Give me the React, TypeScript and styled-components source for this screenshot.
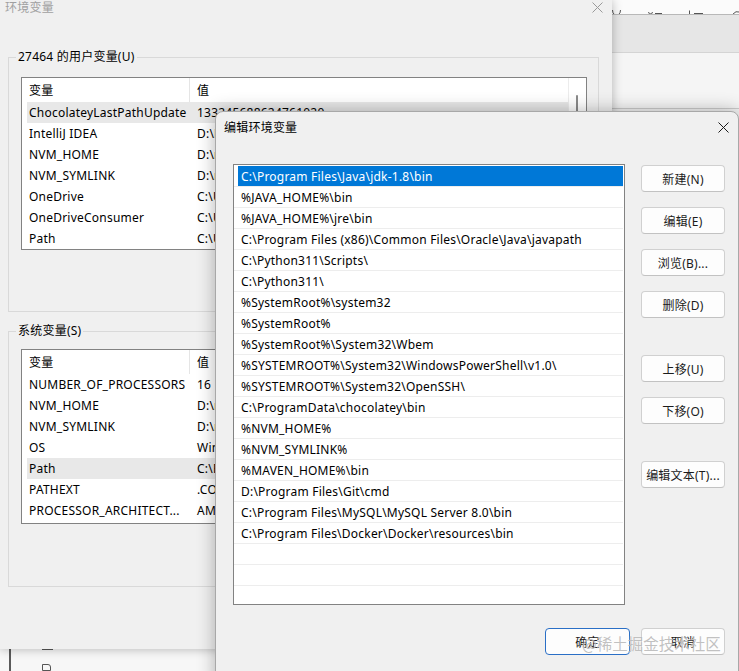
import React from "react";
import styled, { createGlobalStyle } from "styled-components";

const FONT = `"Noto Sans", "Noto Sans CJK SC", sans-serif`;

const Global = createGlobalStyle`
  html, body { margin: 0; padding: 0; background: #f4f4f4; }
  body { font-family: ${FONT}; font-size: 12px; letter-spacing: 0.22px; color: #000; }
  * { box-sizing: border-box; }
`;

const Desktop = styled.div`
  position: relative;
  width: 739px;
  height: 671px;
  overflow: hidden;
  background: #f4f4f4;
`;

/* ---------- windows behind ---------- */
const OtherApp = styled.div`
  position: absolute;
  left: 600px;
  top: 0;
  width: 139px;
  display: flex;
  flex-direction: column;
`;
const OtherStrip = styled.div`
  height: 15px;
  background: #fbfbfb;
  border-bottom: 1px solid #b8b8b8;
  overflow: hidden;
  display: flex;
`;
const OtherBand = styled.div`
  height: 38px;
  background: #e6e6e6;
  border-bottom: 1px solid #d4d4d4;
`;
const OtherBody = styled.div`
  height: 56px;
  background: #f5f5f5;
  border-bottom: 1px solid #cdcdcd;
`;

const BottomApp = styled.div`
  position: absolute;
  left: 0;
  top: 640px;
  width: 240px;
  height: 31px;
  background: #f7f7f7;
  display: flex;
  padding-left: 9px;
`;
const BottomRail = styled.div`
  width: 2px;
  background: #5a5a5a;
`;
const BottomIcons = styled.div`
  display: flex;
  flex-direction: column;
  gap: 14px;
  padding: 6px 0 0 31px;
`;
const TinyBox = styled.div`
  width: 11px;
  height: 6px;
  border: 1px solid #555;
  border-top: none;
`;
const TinyFile = styled.div`
  width: 9px;
  height: 10px;
  border: 1px solid #555;
  border-top-right-radius: 3px;
`;

/* ---------- back dialog: 环境变量 ---------- */
const EnvDialog = styled.div`
  position: absolute;
  left: 0;
  top: 0;
  width: 612px;
  height: 649px;
  background: #f0f0f0;
  box-shadow: 0 0 10px rgba(0, 0, 0, 0.28);
  display: flex;
  flex-direction: column;
`;
const EnvTitleBar = styled.div`
  height: 14px;
  display: flex;
  align-items: center;
  justify-content: space-between;
  padding: 0 9px 0 5px;
  color: #a0a0a0;
  font-size: 12px;
`;
const EnvBody = styled.div`
  padding: 0 13px 0 8px;
  display: flex;
  flex-direction: column;
`;
const Group = styled.fieldset<{ $mt: number }>`
  margin: ${(p) => p.$mt}px 0 0 0;
  padding: 0;
  border: 1px solid #d9d9d9;
  min-width: 0;
`;
const Legend = styled.legend`
  margin-left: 7px;
  padding: 0 2px;
  line-height: 16px;
  font-size: 12px;
  color: #000;
`;
const GroupInner = styled.div<{ $pt: number; $h: number }>`
  height: ${(p) => p.$h}px;
  padding: ${(p) => p.$pt}px 11px 0 12px;
`;
const ListView = styled.div<{ $h: number }>`
  height: ${(p) => p.$h}px;
  background: #fff;
  border: 1px solid #828282;
  display: flex;
  overflow: hidden;
`;
const ListMain = styled.div`
  flex: 1;
  min-width: 0;
  display: flex;
  flex-direction: column;
`;
const HeaderRow = styled.div`
  height: 24px;
  display: grid;
  grid-template-columns: 168px 1fr;
  flex-shrink: 0;
`;
const HeaderCell = styled.div<{ $divider?: boolean }>`
  padding-left: 7px;
  display: flex;
  align-items: center;
  border-right: ${(p) => (p.$divider ? "1px solid #e5e5e5" : "none")};
`;
const DataRow = styled.div<{ $hl?: boolean }>`
  height: 21px;
  margin-left: 5px;
  display: grid;
  grid-template-columns: 163px 1fr;
  align-items: center;
  background: ${(p) => (p.$hl ? "#e8e8e8" : "transparent")};
  white-space: nowrap;
`;
const NameCell = styled.div`
  padding-left: 2px;
  overflow: hidden;
`;
const ValueCell = styled.div`
  padding-left: 7px;
  overflow: hidden;
`;
const ScrollTrack = styled.div`
  width: 18px;
  border-left: 1px solid #ececec;
  padding: 17px 0 0 7px;
`;
const ScrollThumb = styled.div`
  width: 2px;
  height: 60px;
  background: #8a8a8a;
  border-radius: 1px;
`;

/* ---------- front dialog: 编辑环境变量 ---------- */
const EditDialog = styled.div`
  position: absolute;
  left: 215px;
  top: 111px;
  width: 524px;
  height: 575px;
  background: #f0f0f0;
  border: 1px solid #a8a8a8;
  border-radius: 8px 8px 0 0;
  box-shadow: 0 0 18px rgba(0, 0, 0, 0.3);
  display: flex;
  flex-direction: column;
`;
const EditTitleBar = styled.div`
  height: 30px;
  display: flex;
  align-items: center;
  justify-content: space-between;
  padding: 0 9px 0 8px;
  font-size: 12px;
`;
const EditBody = styled.div`
  display: flex;
  gap: 16px;
  padding: 22px 13px 0 17px;
`;
const PathList = styled.div`
  width: 392px;
  height: 441px;
  background: #fff;
  border: 1px solid #828282;
  padding-top: 1px;
  overflow: hidden;
`;
const PathRow = styled.div<{ $sel?: boolean }>`
  height: 21px;
  border-bottom: 1px solid #ededed;
  margin-right: 1px;
  display: flex;
  align-items: stretch;
  padding-left: ${(p) => (p.$sel ? "4px" : "0")};
`;
const PathText = styled.div<{ $sel?: boolean }>`
  flex: 1;
  display: flex;
  align-items: center;
  padding-left: ${(p) => (p.$sel ? "3px" : "7px")};
  background: ${(p) => (p.$sel ? "#0078d7" : "transparent")};
  color: ${(p) => (p.$sel ? "#fff" : "#000")};
  white-space: nowrap;
`;
const SideButtons = styled.div`
  width: 84px;
  display: flex;
  flex-direction: column;
  padding-top: 1px;
`;
const BtnGroup = styled.div<{ $mt: number }>`
  display: flex;
  flex-direction: column;
  gap: 15px;
  margin-top: ${(p) => p.$mt}px;
`;
const Button = styled.button<{ $primary?: boolean; $w?: number }>`
  width: ${(p) => p.$w ?? 84}px;
  height: 27px;
  background: #fdfdfd;
  border: 1px solid ${(p) => (p.$primary ? "#2a6fc6" : "#d0d0d0")};
  border-bottom-color: ${(p) => (p.$primary ? "#2a6fc6" : "#c2c2c2")};
  border-radius: 4px;
  font-family: ${FONT};
  font-size: 12px;
  letter-spacing: 0.22px;
  color: #1b1b1b;
  padding: 0;
  display: flex;
  align-items: center;
  justify-content: center;
`;
const Footer = styled.div`
  display: flex;
  justify-content: flex-end;
  gap: 11px;
  padding: 23px 13px 0 0;
`;
const Grip = styled.div`
  position: absolute;
  right: 2px;
  bottom: 1px;
  width: 10px;
  height: 10px;
`;
const Watermark = styled.div`
  position: absolute;
  left: 582px;
  top: 631px;
  font-size: 15.5px;
  line-height: 24px;
  letter-spacing: 0;
  color: rgba(140, 140, 140, 0.55);
  text-shadow: 0 0 1px rgba(255, 255, 255, 0.9);
  white-space: nowrap;
  pointer-events: none;
  font-family: "Noto Sans CJK SC", sans-serif;
`;

const CloseX = ({ color }: { color: string }) => (
  <svg width="11" height="11" viewBox="0 0 11 11">
    <path d="M0.5 0.5 L10.5 10.5 M10.5 0.5 L0.5 10.5" stroke={color} strokeWidth="1" fill="none" />
  </svg>
);

/* glyph bottoms of a toolbar peeking out behind the dialogs */
const StripMarks = () => (
  <svg width="139" height="15" viewBox="0 0 139 15">
    <g stroke="#555" strokeWidth="1" fill="none">
      <path d="M12.5 10 Q12.5 13.5 14.5 14.5" />
      <path d="M20.5 10 Q20.5 13.5 18.5 14.5" />
      <path d="M48 12.5 Q50.5 15 53 12.5" />
      <path d="M55 13.5 H62" />
      <path d="M89.5 10.5 V14.5 M87.5 14.5 H91.5" />
      <path d="M94 13.5 H103" />
      <path d="M133 14 Q136 10.5 139 12" />
    </g>
  </svg>
);

const userVars: [string, string][] = [
  ["ChocolateyLastPathUpdate", "133245688624761020"],
  ["IntelliJ IDEA", "D:\\Program Files\\JetBrains\\IntelliJ IDEA\\bin;"],
  ["NVM_HOME", "D:\\nvm"],
  ["NVM_SYMLINK", "D:\\nodejs"],
  ["OneDrive", "C:\\Users\\27464\\OneDrive"],
  ["OneDriveConsumer", "C:\\Users\\27464\\OneDrive"],
  ["Path", "C:\\Users\\27464\\AppData\\Local\\Microsoft\\WindowsApps"],
];

const sysVars: [string, string][] = [
  ["NUMBER_OF_PROCESSORS", "16"],
  ["NVM_HOME", "D:\\nvm"],
  ["NVM_SYMLINK", "D:\\nodejs"],
  ["OS", "Windows_NT"],
  ["Path", "C:\\Program Files\\Java\\jdk-1.8\\bin"],
  ["PATHEXT", ".COM;.EXE;.BAT;.CMD"],
  ["PROCESSOR_ARCHITECT...", "AMD64"],
];

const paths = [
  "C:\\Program Files\\Java\\jdk-1.8\\bin",
  "%JAVA_HOME%\\bin",
  "%JAVA_HOME%\\jre\\bin",
  "C:\\Program Files (x86)\\Common Files\\Oracle\\Java\\javapath",
  "C:\\Python311\\Scripts\\",
  "C:\\Python311\\",
  "%SystemRoot%\\system32",
  "%SystemRoot%",
  "%SystemRoot%\\System32\\Wbem",
  "%SYSTEMROOT%\\System32\\WindowsPowerShell\\v1.0\\",
  "%SYSTEMROOT%\\System32\\OpenSSH\\",
  "C:\\ProgramData\\chocolatey\\bin",
  "%NVM_HOME%",
  "%NVM_SYMLINK%",
  "%MAVEN_HOME%\\bin",
  "D:\\Program Files\\Git\\cmd",
  "C:\\Program Files\\MySQL\\MySQL Server 8.0\\bin",
  "C:\\Program Files\\Docker\\Docker\\resources\\bin",
  "",
  "",
  "",
];

export default function App() {
  return (
    <>
      <Global />
      <Desktop>
        <OtherApp>
          <OtherStrip>
            <StripMarks />
          </OtherStrip>
          <OtherBand />
          <OtherBody />
        </OtherApp>

        <BottomApp>
          <BottomRail />
          <BottomIcons>
            <TinyBox />
            <TinyFile />
          </BottomIcons>
        </BottomApp>

        <EnvDialog>
          <EnvTitleBar>
            <span>环境变量</span>
            <CloseX color="#9a9a9a" />
          </EnvTitleBar>
          <EnvBody>
            <Group $mt={35}>
              <Legend>27464 的用户变量(U)</Legend>
              <GroupInner $pt={12} $h={246}>
                <ListView $h={173}>
                  <ListMain>
                    <HeaderRow>
                      <HeaderCell $divider>变量</HeaderCell>
                      <HeaderCell>值</HeaderCell>
                    </HeaderRow>
                    {userVars.map(([n, v], i) => (
                      <DataRow key={n} $hl={i === 0}>
                        <NameCell>{n}</NameCell>
                        <ValueCell>{v}</ValueCell>
                      </DataRow>
                    ))}
                  </ListMain>
                  <ScrollTrack>
                    <ScrollThumb />
                  </ScrollTrack>
                </ListView>
              </GroupInner>
            </Group>
            <Group $mt={11}>
              <Legend>系统变量(S)</Legend>
              <GroupInner $pt={10} $h={247}>
                <ListView $h={175}>
                  <ListMain>
                    <HeaderRow>
                      <HeaderCell $divider>变量</HeaderCell>
                      <HeaderCell>值</HeaderCell>
                    </HeaderRow>
                    {sysVars.map(([n, v]) => (
                      <DataRow key={n} $hl={n === "Path"}>
                        <NameCell>{n}</NameCell>
                        <ValueCell>{v}</ValueCell>
                      </DataRow>
                    ))}
                  </ListMain>
                </ListView>
              </GroupInner>
            </Group>
          </EnvBody>
        </EnvDialog>

        <EditDialog>
          <EditTitleBar>
            <span>编辑环境变量</span>
            <CloseX color="#1a1a1a" />
          </EditTitleBar>
          <EditBody>
            <PathList>
              {paths.map((p, i) => (
                <PathRow key={i} $sel={i === 0}>
                  <PathText $sel={i === 0}>{p}</PathText>
                </PathRow>
              ))}
            </PathList>
            <SideButtons>
              <BtnGroup $mt={0}>
                <Button>新建(N)</Button>
                <Button>编辑(E)</Button>
                <Button>浏览(B)...</Button>
                <Button>删除(D)</Button>
              </BtnGroup>
              <BtnGroup $mt={37}>
                <Button>上移(U)</Button>
                <Button>下移(O)</Button>
              </BtnGroup>
              <BtnGroup $mt={37}>
                <Button>编辑文本(T)...</Button>
              </BtnGroup>
            </SideButtons>
          </EditBody>
          <Footer>
            <Button $primary $w={85}>确定</Button>
            <Button>取消</Button>
          </Footer>
          <Grip>
            <svg width="10" height="10" viewBox="0 0 10 10">
              {[
                [8, 2], [8, 5], [5, 5], [8, 8], [5, 8], [2, 8],
              ].map(([x, y], i) => (
                <rect key={i} x={x} y={y} width="1.2" height="1.2" fill="#9a9a9a" />
              ))}
            </svg>
          </Grip>
        </EditDialog>

        <Watermark>@稀土掘金技术社区</Watermark>
      </Desktop>
    </>
  );
}
